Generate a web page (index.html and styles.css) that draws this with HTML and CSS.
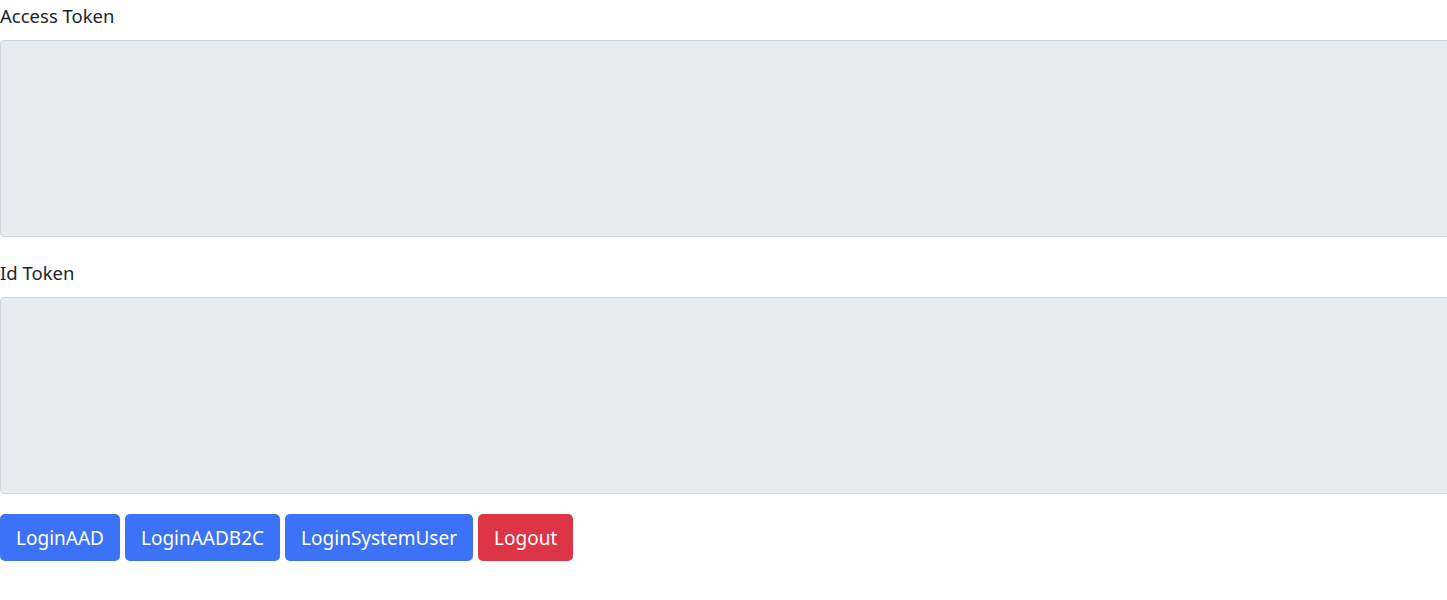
FILE: index.html
```html
<!DOCTYPE html>
<html>
<head>
<meta charset="utf-8">
<link rel="stylesheet" href="styles.css">
</head>
<body>
<div class="page">
  <div class="field">
    <label class="form-label">Access Token</label>
    <textarea class="form-control" disabled></textarea>
  </div>
  <div class="field field-last">
    <label class="form-label">Id Token</label>
    <textarea class="form-control" disabled></textarea>
  </div>
  <div class="actions">
    <button class="btn btn-primary">LoginAAD</button>
    <button class="btn btn-primary">LoginAADB2C</button>
    <button class="btn btn-primary">LoginSystemUser</button>
    <button class="btn btn-danger">Logout</button>
  </div>
</div>
</body>
</html>
```

FILE: styles.css
```css
html, body {
  margin: 0;
  padding: 0;
  background: #fff;
  overflow: hidden;
}
body {
  font-family: "Noto Sans", "Open Sans", sans-serif;
  font-size: 16px;
  line-height: 1.5;
  color: #212529;
}
.page {
  padding-top: 4px;
}
.field {
  display: flex;
  flex-direction: column;
  align-items: flex-start;
  margin-bottom: 24px;
}
.field-last {
  margin-bottom: 20px;
}
.form-label {
  display: block;
  margin-bottom: 12px;
  font-size: 18.5px;
  line-height: 24px;
}
.form-control {
  display: block;
  box-sizing: border-box;
  width: 1470px;
  height: 197px;
  margin: 0;
  padding: 6px 12px;
  border: 1px solid #ced4da;
  border-radius: 4px;
  background: #e9ecef;
  resize: none;
  font: inherit;
}
.actions {
  display: flex;
  gap: 5px;
}
.btn {
  box-sizing: border-box;
  height: 47px;
  padding: 0 16px;
  border: none;
  border-radius: 5px;
  font-family: inherit;
  font-size: 19px;
  color: #fff;
  cursor: pointer;
}
.btn-primary {
  background: #3b72f7;
}
.btn-danger {
  background: #dc3545;
}
```
